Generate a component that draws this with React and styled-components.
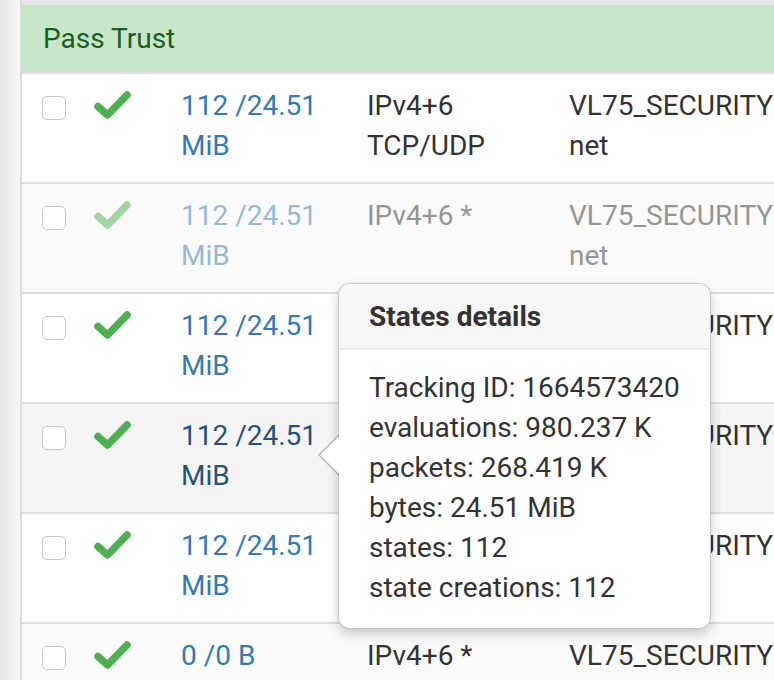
import React from 'react'
import styled, { createGlobalStyle } from 'styled-components'

const GlobalStyle = createGlobalStyle`
  html, body {
    margin: 0;
    padding: 0;
    background: #fff;
    font-family: Roboto, "Liberation Sans", sans-serif;
    color: #333;
  }
`

const Page = styled.div`
  display: flex;
  width: 774px;
  height: 680px;
  overflow: hidden;
`

const SideStrip = styled.div`
  width: 20px;
  flex-shrink: 0;
  background: linear-gradient(to right, #e8e8e8, #f6f6f6);
  border-right: 2px solid #dcdcdc;
`

const Main = styled.div`
  position: relative;
  flex: 1;
  border-top: 5px solid #e6e6e6;
`

const PanelHeading = styled.div`
  height: 67px;
  display: flex;
  align-items: center;
  padding-left: 21px;
  background: #c8e6c9;
  border-bottom: 2px solid #dedede;
  color: #1b5e20;
  font-size: 28px;
`

const Row = styled.div`
  display: grid;
  grid-template-columns: 52px 87px 186px 202px 1fr;
  padding: 12px 0 0 20px;
  box-sizing: border-box;
  height: 110px;
  border-bottom: 2px solid #dedede;
  background: ${({ $bg }) => $bg};
  font-size: 28px;
  line-height: 40px;
  white-space: nowrap;
`

const Cell = styled.div`
  opacity: ${({ $faded }) => ($faded ? 0.5 : 1)};
`

const Checkbox = styled.span`
  display: block;
  width: 22px;
  height: 22px;
  margin-top: 10px;
  border: 1px solid #c8c8c8;
  border-radius: 5px;
  background: #fff;
`

const Link = styled.span`
  display: block;
  color: ${({ $hover }) => ($hover ? '#23527c' : '#337ab7')};
`

const Line = styled.span`
  display: block;
`

const Popover = styled.div`
  position: absolute;
  left: 316px;
  top: 278px;
  width: 371px;
  background: #fff;
  border: 1px solid rgba(0, 0, 0, 0.22);
  border-radius: 12px;
  box-shadow: 0 5px 12px rgba(0, 0, 0, 0.2);
  font-size: 28px;

  &::before, &::after {
    content: '';
    position: absolute;
    top: 150px;
    border-style: solid;
    border-color: transparent;
  }
  &::before {
    left: -21px;
    border-width: 21px 21px 21px 0;
    border-right-color: rgba(0, 0, 0, 0.25);
  }
  &::after {
    left: -19px;
    top: 151px;
    border-width: 20px 20px 20px 0;
    border-right-color: #fff;
  }
`

const PopoverTitle = styled.div`
  height: 64px;
  display: flex;
  align-items: center;
  padding-left: 30px;
  background: #f7f7f7;
  border-bottom: 2px solid #ebebeb;
  border-radius: 11px 11px 0 0;
  font-weight: bold;
  color: #333;
`

const PopoverBody = styled.div`
  padding: 18px 30px 20px;
  line-height: 40px;
  color: #333;
  white-space: nowrap;
`

function CheckIcon({ faded }) {
  return (
    <svg width="38" height="30" viewBox="0 0 38 30" style={{ marginTop: 4, opacity: faded ? 0.5 : 1 }}>
      <path d="M4 16.5 L13.5 25 L33 5" fill="none" stroke="#4caf50" strokeWidth="7.5" strokeLinecap="round" strokeLinejoin="round" />
    </svg>
  )
}

const rows = [
  { bg: '#fff', states: ['112 /24.51', 'MiB'], proto: ['IPv4+6', 'TCP/UDP'], src: ['VL75_SECURITY', 'net'] },
  { bg: '#fafafa', faded: true, states: ['112 /24.51', 'MiB'], proto: ['IPv4+6 *'], src: ['VL75_SECURITY', 'net'] },
  { bg: '#fff', states: ['112 /24.51', 'MiB'], proto: ['IPv4+6 *'], src: ['VL75_SECURITY', 'net'] },
  { bg: '#f5f5f5', hover: true, states: ['112 /24.51', 'MiB'], proto: ['IPv4+6 *'], src: ['VL75_SECURITY', 'net'] },
  { bg: '#fff', states: ['112 /24.51', 'MiB'], proto: ['IPv4+6 *'], src: ['VL75_SECURITY', 'net'] },
  { bg: '#fafafa', states: ['0 /0 B'], proto: ['IPv4+6 *'], src: ['VL75_SECURITY'] },
]

const details = [
  'Tracking ID: 1664573420',
  'evaluations: 980.237 K',
  'packets: 268.419 K',
  'bytes: 24.51 MiB',
  'states: 112',
  'state creations: 112',
]

export default function App() {
  return (
    <Page>
      <GlobalStyle />
      <SideStrip />
      <Main>
        <PanelHeading>Pass Trust</PanelHeading>
        {rows.map((r, i) => (
          <Row key={i} $bg={r.bg}>
            <Cell><Checkbox /></Cell>
            <Cell><CheckIcon faded={r.faded} /></Cell>
            <Cell $faded={r.faded}>
              {r.states.map(t => <Link key={t} $hover={r.hover}>{t}</Link>)}
            </Cell>
            <Cell $faded={r.faded}>
              {r.proto.map(t => <Line key={t}>{t}</Line>)}
            </Cell>
            <Cell $faded={r.faded}>
              {r.src.map(t => <Line key={t}>{t}</Line>)}
            </Cell>
          </Row>
        ))}
        <Popover>
          <PopoverTitle>States details</PopoverTitle>
          <PopoverBody>
            {details.map(d => <Line key={d}>{d}</Line>)}
          </PopoverBody>
        </Popover>
      </Main>
    </Page>
  )
}
